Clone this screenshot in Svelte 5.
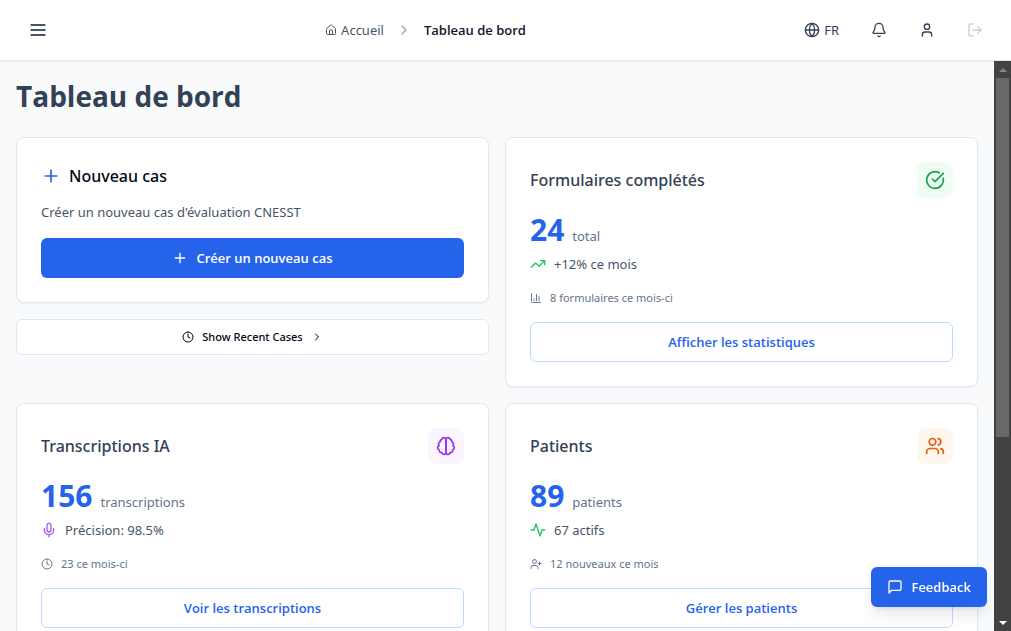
<script>
  const icons = {
    menu: ['M4 6h16', 'M4 12h16', 'M4 18h16'],
    home: [
      'M15 21v-8a1 1 0 0 0-1-1h-4a1 1 0 0 0-1 1v8',
      'M3 10a2 2 0 0 1 .709-1.528l7-5.999a2 2 0 0 1 2.582 0l7 5.999A2 2 0 0 1 21 10v9a2 2 0 0 1-2 2H5a2 2 0 0 1-2-2z'
    ],
    chevron: ['m9 18 6-6-6-6'],
    globe: ['M12 2a10 10 0 1 0 0 20a10 10 0 1 0 0-20', 'M12 2a14.5 14.5 0 0 0 0 20 14.5 14.5 0 0 0 0-20', 'M2 12h20'],
    bell: [
      'M10.268 21a2 2 0 0 0 3.464 0',
      'M3.262 15.326A1 1 0 0 0 4 17h16a1 1 0 0 0 .74-1.673C19.41 13.956 18 12.499 18 8A6 6 0 0 0 6 8c0 4.499-1.411 5.956-2.738 7.326'
    ],
    user: ['M19 21v-2a4 4 0 0 0-4-4H9a4 4 0 0 0-4 4v2', 'M12 3a4 4 0 1 0 0 8a4 4 0 1 0 0-8'],
    logout: ['m16 17 5-5-5-5', 'M21 12H9', 'M9 21H5a2 2 0 0 1-2-2V5a2 2 0 0 1 2-2h4'],
    plus: ['M5 12h14', 'M12 5v14'],
    clock: ['M12 2a10 10 0 1 0 0 20a10 10 0 1 0 0-20', 'M12 6v6l4 2'],
    check: ['M21.801 10A10 10 0 1 1 17 3.335', 'm9 11 3 3L22 4'],
    trend: ['M16 7h6v6', 'm22 7-8.5 8.5-5-5L2 17'],
    chart: ['M3 3v16a2 2 0 0 0 2 2h16', 'M18 17V9', 'M13 17V5', 'M8 17v-3'],
    brain: [
      'M9.5 2A2.5 2.5 0 0 1 12 4.5v15a2.5 2.5 0 0 1-4.96.44 2.5 2.5 0 0 1-2.96-3.08 3 3 0 0 1-.34-5.58 2.5 2.5 0 0 1 1.32-4.24 2.5 2.5 0 0 1 1.98-3A2.5 2.5 0 0 1 9.5 2Z',
      'M14.5 2A2.5 2.5 0 0 0 12 4.5v15a2.5 2.5 0 0 0 4.96.44 2.5 2.5 0 0 0 2.96-3.08 3 3 0 0 0 .34-5.58 2.5 2.5 0 0 0-1.32-4.24 2.5 2.5 0 0 0-1.98-3A2.5 2.5 0 0 0 14.5 2Z'
    ],
    mic: ['M12 19v3', 'M19 10v2a7 7 0 0 1-14 0v-2', 'M12 2a3 3 0 0 0-3 3v7a3 3 0 0 0 6 0V5a3 3 0 0 0-3-3Z'],
    users: [
      'M16 21v-2a4 4 0 0 0-4-4H6a4 4 0 0 0-4 4v2',
      'M16 3.128a4 4 0 0 1 0 7.744',
      'M22 21v-2a4 4 0 0 0-3-3.87',
      'M9 3a4 4 0 1 0 0 8a4 4 0 1 0 0-8'
    ],
    activity: [
      'M22 12h-4l-3 9L9 3l-3 9H2'
    ],
    userPlus: [
      'M16 21v-2a4 4 0 0 0-4-4H6a4 4 0 0 0-4 4v2',
      'M9 3a4 4 0 1 0 0 8a4 4 0 1 0 0-8',
      'M19 8v6',
      'M22 11h-6'
    ],
    message: ['M21 15a2 2 0 0 1-2 2H7l-4 4V5a2 2 0 0 1 2-2h14a2 2 0 0 1 2 2z']
  };

  const stats = [
    {
      title: 'Formulaires complétés', icon: 'check', tone: 'green', value: 24, unit: 'total',
      trendIcon: 'trend', trendTone: 'up', trend: '+12% ce mois',
      noteIcon: 'chart', note: '8 formulaires ce mois-ci', action: 'Afficher les statistiques'
    },
    {
      title: 'Transcriptions IA', icon: 'brain', tone: 'purple', value: 156, unit: 'transcriptions',
      trendIcon: 'mic', trendTone: 'voice', trend: 'Précision: 98.5%',
      noteIcon: 'clock', note: '23 ce mois-ci', action: 'Voir les transcriptions'
    },
    {
      title: 'Patients', icon: 'users', tone: 'orange', value: 89, unit: 'patients',
      trendIcon: 'activity', trendTone: 'up', trend: '67 actifs',
      noteIcon: 'userPlus', note: '12 nouveaux ce mois', action: 'Gérer les patients'
    }
  ];
</script>

{#snippet icon(name, size)}
  <svg width={size} height={size} viewBox="0 0 24 24" aria-hidden="true">
    {#each icons[name] as d}<path {d} />{/each}
  </svg>
{/snippet}

<div class="page">
  <header>
    <button class="tool" aria-label="Menu">{@render icon('menu', 20)}</button>
    <nav aria-label="Fil d'Ariane">
      <a href="#accueil">{@render icon('home', 12)}Accueil</a>
      <span class="sep">{@render icon('chevron', 16)}</span>
      <span class="current">Tableau de bord</span>
    </nav>
    <div class="tools">
      <button class="lang">{@render icon('globe', 16)}FR</button>
      <button class="tool" aria-label="Notifications">{@render icon('bell', 16)}</button>
      <button class="tool" aria-label="Profil">{@render icon('user', 16)}</button>
      <button class="tool" aria-label="Déconnexion" disabled>{@render icon('logout', 16)}</button>
    </div>
  </header>

  <div class="body">
    <main>
      <h1>Tableau de bord</h1>
      <div class="grid">
        <div class="stack">
          <section class="card">
            <h2 class="new">{@render icon('plus', 20)}Nouveau cas</h2>
            <p class="desc">Créer un nouveau cas d'évaluation CNESST</p>
            <button class="primary">{@render icon('plus', 16)}Créer un nouveau cas</button>
          </section>
          <button class="recent">
            {@render icon('clock', 12)}Show Recent Cases{@render icon('chevron', 12)}
          </button>
        </div>
        {#each stats as s}
          <section class="card">
            <div class="head">
              <h2>{s.title}</h2>
              <span class="badge {s.tone}">{@render icon(s.icon, 20)}</span>
            </div>
            <p class="figure"><strong>{s.value}</strong><span>{s.unit}</span></p>
            <p class="trend {s.trendTone}">{@render icon(s.trendIcon, 16)}{s.trend}</p>
            <p class="note">{@render icon(s.noteIcon, 12)}{s.note}</p>
            <button class="outline">{s.action}</button>
          </section>
        {/each}
      </div>
    </main>
    <div class="scrollbar" aria-hidden="true">
      <svg width="17" height="17" viewBox="0 0 17 17"><path class="up-arrow" d="M5 11h8L9 7z" /></svg>
      <div class="track"><div class="thumb"></div></div>
      <svg width="17" height="17" viewBox="0 0 17 17"><path class="down-arrow" d="M5 7h8l-4 4z" /></svg>
    </div>
  </div>

  <button class="feedback">{@render icon('message', 16)}Feedback</button>
</div>

<style>
  :global(body) {
    margin: 0;
  }
  * {
    box-sizing: border-box;
  }
  .page {
    height: 100vh;
    display: flex;
    flex-direction: column;
    background: #f8fafc;
    color: #020617;
    font: 400 13px/20px 'Noto Sans', 'Open Sans', sans-serif;
  }
  h1,
  h2,
  p {
    margin: 0;
  }
  button {
    font: inherit;
    color: inherit;
    border: 0;
    padding: 0;
    background: none;
    display: flex;
    align-items: center;
    justify-content: center;
    gap: 8px;
    cursor: pointer;
  }
  svg {
    flex: none;
    display: block;
    fill: none;
    stroke: currentColor;
    stroke-width: 2;
    stroke-linecap: round;
    stroke-linejoin: round;
  }

  header {
    flex: none;
    display: grid;
    grid-template-columns: 1fr auto 1fr;
    align-items: center;
    height: 61px;
    padding: 0 16px;
    background: #fff;
    border-bottom: 1px solid #e2e8f0;
    box-shadow: 0 1px 2px rgb(0 0 0 / 5%);
    position: relative;
    color: #334155;
  }
  .tool {
    width: 40px;
    height: 40px;
  }
  header > .tool {
    width: 44px;
    color: #475569;
  }
  header > .tool svg {
    stroke-width: 2.4;
  }
  .tool:disabled {
    opacity: 0.25;
  }
  nav {
    display: flex;
    align-items: center;
    gap: 12px;
    margin-right: 160px;
  }
  nav a {
    display: flex;
    align-items: center;
    gap: 4px;
    color: #475569;
    text-decoration: none;
  }
  .sep {
    color: #94a3b8;
  }
  h1,
  strong,
  .current,
  .primary,
  .outline,
  .feedback {
    font-family: 'Open Sans', 'Noto Sans', sans-serif;
    font-weight: 600;
  }
  .current {
    color: #0f172a;
  }
  .tools {
    display: flex;
    justify-content: flex-end;
    gap: 8px;
  }
  .lang {
    gap: 4px;
    padding: 0 12px;
  }

  .body {
    flex: 1;
    min-height: 0;
    display: flex;
  }
  main {
    flex: 1;
    overflow-y: auto;
    scrollbar-width: none;
    padding: 16px;
  }
  h1 {
    margin-bottom: 22px;
    font-size: 28px;
    line-height: 38px;
    font-weight: 700;
    color: #334155;
  }
  .grid {
    display: grid;
    grid-template-columns: 1fr 1fr;
    gap: 16px;
  }
  .stack {
    display: flex;
    flex-direction: column;
    gap: 16px;
  }
  .card {
    padding: 24px;
    background: #fff;
    border: 1px solid #e2e8f0;
    border-radius: 8px;
    box-shadow: 0 1px 2px rgb(0 0 0 / 5%);
  }
  h2 {
    font-size: 16px;
    line-height: 28px;
    font-weight: 500;
    color: #334155;
  }
  .new {
    display: flex;
    align-items: center;
    gap: 8px;
    color: #020617;
  }
  .new svg {
    color: #2563eb;
  }
  .desc {
    margin: 12px 0 16px;
    color: #475569;
  }
  .primary,
  .outline {
    width: 100%;
    height: 40px;
    border-radius: 6px;
  }
  .primary {
    background: #2563eb;
    color: #fff;
  }
  .outline {
    border: 1px solid #bfdbfe;
    background: #fff;
    color: #2563eb;
  }
  .recent {
    height: 36px;
    border: 1px solid #e2e8f0;
    border-radius: 6px;
    background: #fff;
    font-size: 11px;
    font-weight: 500;
  }
  .head {
    display: flex;
    align-items: center;
    justify-content: space-between;
  }
  .badge {
    padding: 8px;
    border-radius: 8px;
  }
  .green {
    background: #f0fdf4;
    color: #16a34a;
  }
  .purple {
    background: #faf5ff;
    color: #9333ea;
  }
  .orange {
    background: #fff7ed;
    color: #ea580c;
  }
  .figure {
    display: flex;
    align-items: baseline;
    gap: 8px;
    margin: 14px 0 6px;
    color: #64748b;
  }
  .figure strong {
    font-size: 30px;
    line-height: 36px;
    font-weight: 700;
    color: #2563eb;
  }
  .trend,
  .note {
    display: flex;
    align-items: center;
    gap: 8px;
  }
  .trend {
    color: #475569;
  }
  .up svg {
    color: #22c55e;
  }
  .voice svg {
    color: #a855f7;
  }
  .note {
    margin: 16px 0;
    font-size: 11px;
    line-height: 16px;
    color: #64748b;
  }

  .scrollbar {
    flex: none;
    width: 17px;
    display: flex;
    flex-direction: column;
    background: #424242;
  }
  .track {
    flex: 1;
    padding: 0 2px;
  }
  .thumb {
    height: 67%;
    background: #686868;
  }
  .scrollbar path {
    stroke: none;
  }
  .up-arrow {
    fill: #868686;
  }
  .down-arrow {
    fill: #fff;
  }

  .feedback {
    position: fixed;
    right: 24px;
    bottom: 24px;
    height: 40px;
    padding: 0 16px;
    border-radius: 6px;
    background: #2563eb;
    color: #fff;
    box-shadow: 0 10px 15px -3px rgb(0 0 0 / 10%), 0 4px 6px -4px rgb(0 0 0 / 10%);
  }
</style>
